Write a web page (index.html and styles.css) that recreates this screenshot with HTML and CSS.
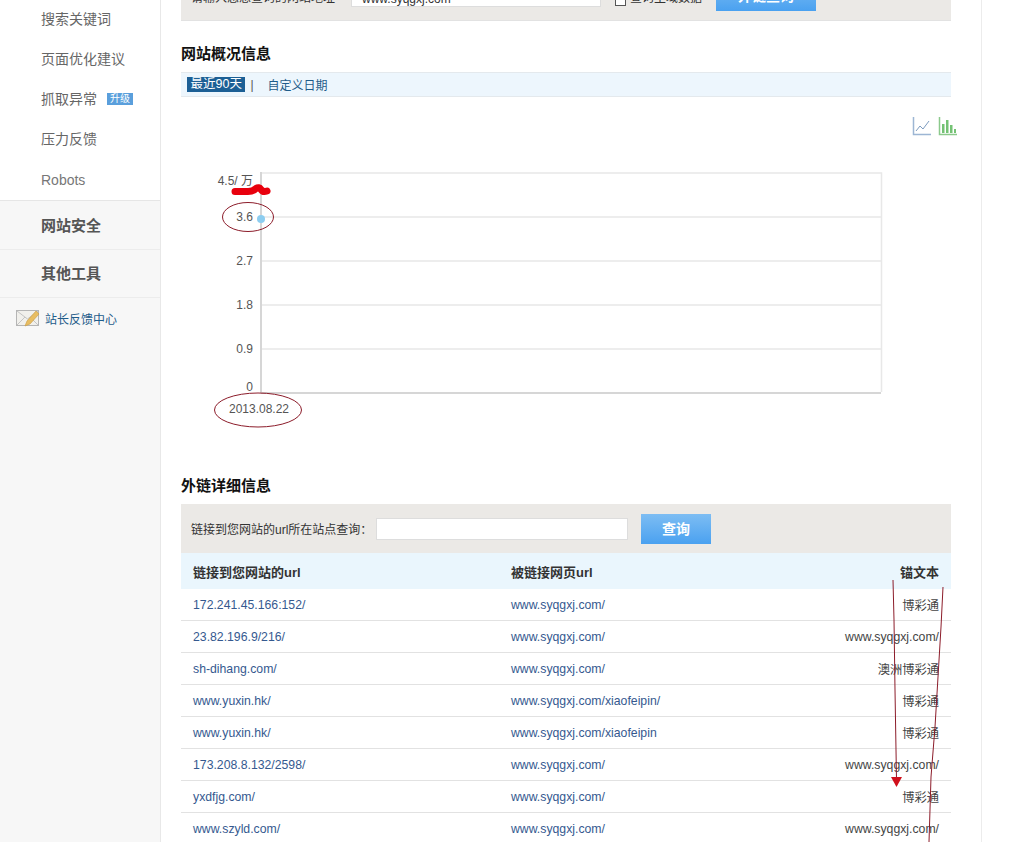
FILE: index.html
```html
<!DOCTYPE html>
<html lang="zh-CN">
<head>
  <meta charset="UTF-8" />
  <title>外链分析</title>
  <link rel="stylesheet" href="styles.css">
</head>
<body>
  <div class="page">

    <!-- Sidebar -->
    <aside class="sidebar">
      <ul class="side-menu">
        <li>搜索关键词</li>
        <li>页面优化建议</li>
        <li>抓取异常 <span class="badge">升级</span></li>
        <li>压力反馈</li>
        <li class="latin">Robots</li>
      </ul>
      <div class="side-group first">网站安全</div>
      <div class="side-group">其他工具</div>
      <a class="feedback" href="#">
        <svg width="24" height="18" viewBox="0 0 24 18">
          <rect x="0.5" y="1.5" width="22" height="15" fill="#f1f0ec" stroke="#b5b5b5"/>
          <path d="M1 2l10.500 8L22 2M1 16l8-8M22 16l-8-8" fill="none" stroke="#c4c4c4"/>
          <path d="M9 17l2-5 9-10 3 3-9 10z" fill="#e8bd62" stroke="#c99a3e" stroke-width="0.6"/>
        </svg>
        站长反馈中心
      </a>
    </aside>

    <!-- Main -->
    <main class="main">
      <div class="query-top">
        <span class="query-label">请输入您想查询的网站地址</span>
        <input class="query-input" type="text" value="www.syqgxj.com" />
        <span class="check-box"></span>
        <span class="check-label">查询主域数据</span>
        <span class="btn btn-top">外链查询</span>
      </div>

      <h2 class="title title-first">网站概况信息</h2>
      <div class="tabs">
        <span class="tab-on">最近90天</span>
        <span class="tab-sep">|</span>
        <a class="tab-link" href="#">自定义日期</a>
      </div>

      <div class="chart-icons">
        <svg width="20" height="20" viewBox="0 0 20 20">
          <path d="M1.500 1v17.500H19" fill="none" stroke="#9db6d4" stroke-width="1.500"/>
          <path d="M4 15l4-5 3 3 6-8" fill="none" stroke="#7d9cc0"/>
        </svg>
        <svg width="20" height="20" viewBox="0 0 20 20">
          <path d="M1.500 1v17.500H19" fill="none" stroke="#8cc98c" stroke-width="1.500"/>
          <path d="M4 17V8h2.500v9zM8 17V4h2.500v13zM12 17V9h2.500v8zM16 17v-4h2v4z" fill="#74c274"/>
        </svg>
      </div>

      <svg class="chart" width="770" height="300" viewBox="0 0 770 300">
        <g class="grid">
          <path d="M80 32H700.500V251M80 76H700M80 120H700M80 164H700M80 208H700"/>
          <path class="axis" d="M80 31V252M80 252H700"/>
        </g>
        <g class="ticks">
          <text x="72" y="44">4.5/ 万</text>
          <text x="72" y="80">3.6</text>
          <text x="72" y="124">2.7</text>
          <text x="72" y="168">1.8</text>
          <text x="72" y="212">0.9</text>
          <text x="72" y="250">0</text>
          <text class="date" x="78" y="272">2013.08.22</text>
        </g>
        <circle cx="80" cy="78" r="4" fill="#8ccdf0"/>
      </svg>

      <h2 class="title title-second">外链详细信息</h2>
      <div class="query-bar">
        <label class="query-label bar-label">链接到您网站的url所在站点查询：</label>
        <input class="query-input wide" type="text" />
        <span class="btn">查询</span>
      </div>

      <table class="links">
        <thead>
          <tr><th class="col-a">链接到您网站的url</th><th class="col-b">被链接网页url</th><th class="col-c">锚文本</th></tr>
        </thead>
        <tbody>
          <tr><td><a href="#">172.241.45.166:152/</a></td><td><a href="#">www.syqgxj.com/</a></td><td>博彩通</td></tr>
          <tr><td><a href="#">23.82.196.9/216/</a></td><td><a href="#">www.syqgxj.com/</a></td><td>www.syqgxj.com/</td></tr>
          <tr><td><a href="#">sh-dihang.com/</a></td><td><a href="#">www.syqgxj.com/</a></td><td>澳洲博彩通</td></tr>
          <tr><td><a href="#">www.yuxin.hk/</a></td><td><a href="#">www.syqgxj.com/xiaofeipin/</a></td><td>博彩通</td></tr>
          <tr><td><a href="#">www.yuxin.hk/</a></td><td><a href="#">www.syqgxj.com/xiaofeipin</a></td><td>博彩通</td></tr>
          <tr><td><a href="#">173.208.8.132/2598/</a></td><td><a href="#">www.syqgxj.com/</a></td><td>www.syqgxj.com/</td></tr>
          <tr><td><a href="#">yxdfjg.com/</a></td><td><a href="#">www.syqgxj.com/</a></td><td>博彩通</td></tr>
          <tr><td><a href="#">www.szyld.com/</a></td><td><a href="#">www.syqgxj.com/</a></td><td>www.syqgxj.com/</td></tr>
        </tbody>
      </table>
    </main>
  </div>

  <!-- Red marks drawn over the screenshot -->
  <svg class="marks" width="1029" height="842" viewBox="0 0 1029 842">
    <g fill="none" stroke="#8c1c2a" stroke-width="1">
      <ellipse cx="248" cy="217" rx="25.500" ry="14.500"/>
      <ellipse cx="258" cy="410" rx="43.500" ry="17"/>
      <path d="M893 580l1 40 1 70 1 60 .5 30"/>
      <path d="M943 587l-2 40-3 50-3 50-4 50-2 65"/>
    </g>
    <path d="M891 777h11l-5.500 10z" fill="#d0101c"/>
    <path d="M235 191.500h13q5 0 8-3 3-2 5 1t6 1.500" fill="none" stroke="#e8000d" stroke-width="7" stroke-linecap="round"/>
  </svg>
</body>
</html>
```

FILE: styles.css
```css
html, body {
  margin: 0;
  height: 842px;
  overflow: hidden;
  background: #fff;
}

body {
  font-family: "Liberation Sans", "Noto Sans CJK SC", sans-serif;
  font-size: 12px;
  color: #333;
  position: relative;
}

.page {
  display: flex;
  width: 981px;
  height: 842px;
  border-right: 1px solid #ececec;
}

/* Sidebar */
.sidebar {
  width: 160px;
  flex: none;
  background: #f7f7f7;
  border-right: 1px solid #e8e8e8;
}

.side-menu {
  list-style: none;
  margin: -1px 0 0;
  padding: 0 0 1px;
  background: #fff;
  border-bottom: 1px solid #e6e6e6;
}

.side-menu li {
  height: 40px;
  line-height: 40px;
  padding-left: 41px;
  font-size: 14px;
  color: #666;
}

.side-menu li.latin {
  line-height: 42px;
  color: #777;
}

.badge {
  display: inline-block;
  margin-left: 6px;
  padding: 0 3px;
  height: 12px;
  line-height: 12px;
  font-size: 10px;
  color: #fff;
  background: #5a9fdc;
  vertical-align: 2px;
}

.side-group {
  height: 47px;
  line-height: 47px;
  padding-left: 41px;
  font-size: 15px;
  font-weight: bold;
  color: #555;
  border-bottom: 1px solid #ececec;
}

.side-group.first {
  padding-top: 1px;
}

.feedback {
  display: flex;
  align-items: center;
  gap: 5px;
  padding: 11px 0 0 16px;
  color: #1f5c8a;
  text-decoration: none;
}

/* Main */
.main {
  flex: 1;
  padding: 0 30px 0 20px;
  min-width: 0;
}

.query-top {
  display: flex;
  align-items: flex-end;
  height: 20px;
  background: #ebe9e6;
  border-bottom: 1px solid #e2e2e2;
  padding-left: 10px;
  overflow: hidden;
  white-space: nowrap;
}

.query-top .query-label {
  margin-bottom: 15px;
  width: 160px;
}

.query-top .query-input {
  width: 250px;
  height: 22px;
  margin-bottom: 13px;
  padding-top: 6px;
}

.check-box {
  box-sizing: border-box;
  width: 11px;
  height: 11px;
  border: 1px solid #555;
  background: #fff;
  margin: 0 4px 14px 14px;
}

.check-label {
  margin-bottom: 15px;
  width: 86px;
}

.query-label {
  color: #333;
}

.query-input {
  box-sizing: border-box;
  border: 1px solid #ddd;
  background: #fff;
  padding: 0 10px;
  font: 12px "Liberation Sans", sans-serif;
  color: #333;
  outline: none;
}

.btn {
  display: inline-block;
  width: 70px;
  height: 30px;
  line-height: 30px;
  flex: none;
  text-align: center;
  color: #fff;
  font-size: 14px;
  font-weight: bold;
  background: linear-gradient(#7dbdf3, #4aa1f0);
}

.query-top .btn-top {
  width: 100px;
  margin: 0 0 9px;
}

.title {
  margin: 0;
  font-size: 15px;
  font-weight: bold;
  color: #111;
  line-height: 20px;
}

.title-first {
  margin-top: 23px;
}

.tabs {
  display: flex;
  align-items: center;
  margin-top: 8px;
  height: 23px;
  padding-left: 6px;
  background: #edf6fd;
  border-top: 1px solid #e4e9ed;
  border-bottom: 1px solid #e4e9ed;
}

.tab-on {
  background: #1c5f95;
  color: #fff;
  padding: 0 3.500px;
  height: 15px;
  line-height: 15px;
  font-size: 12.500px;
}

.tab-sep {
  margin: 0 14px 0 5px;
  color: #555;
}

.tab-link {
  color: #1f5c8a;
  text-decoration: none;
}

.chart-icons {
  display: flex;
  justify-content: flex-end;
  gap: 6px;
  margin: 19px -7px 0 0;
  height: 20px;
}

.chart {
  display: block;
  margin-top: 5px;
}

.grid path {
  fill: none;
  stroke: #e8e8e8;
  stroke-width: 1.500;
}

.grid path.axis {
  stroke: #d6d6d6;
  stroke-width: 2;
}

.ticks text {
  font-size: 12px;
  fill: #555;
  text-anchor: end;
}

.ticks text.date {
  text-anchor: middle;
}

.title-second {
  margin-top: 35px;
}

.query-bar {
  display: flex;
  align-items: center;
  height: 49px;
  margin-top: 8px;
  padding-left: 10px;
  background: #ebe9e6;
}

.bar-label {
  flex: none;
  width: 185px;
  white-space: nowrap;
}

.query-input.wide {
  width: 252px;
  height: 22px;
  margin-right: 13px;
}

/* Table */
.links {
  width: 770px;
  border-collapse: collapse;
  table-layout: fixed;
}

.links th {
  height: 36px;
  padding: 0;
  background: #eaf6fd;
  font-size: 13px;
  font-weight: bold;
  text-align: left;
  color: #333;
}

.links td {
  height: 31px;
  padding: 0;
  border-bottom: 1px solid #e2e2e2;
  font-size: 12.250px;
  color: #444;
}

.links th:first-child, .links td:first-child {
  padding-left: 12px;
}

.links th:last-child, .links td:last-child {
  text-align: right;
  padding-right: 12px;
}

.col-a { width: 318px; }
.col-b { width: 210px; }

.links a {
  color: #35598f;
  text-decoration: none;
}

/* Annotations on top of the page */
.marks {
  position: absolute;
  left: 0;
  top: 0;
  pointer-events: none;
}
```
